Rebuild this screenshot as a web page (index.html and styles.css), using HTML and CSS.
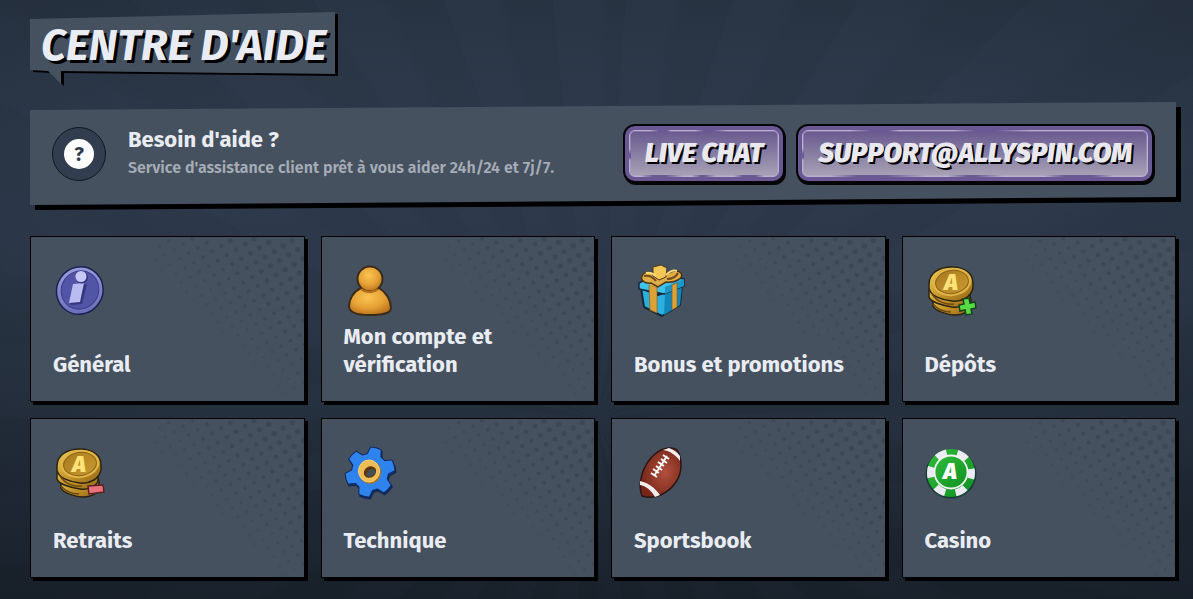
FILE: index.html
```
<!DOCTYPE html>
<html lang="fr">
<head>
<meta charset="utf-8">
<title>Centre d'aide</title>
<link rel="stylesheet" href="styles.css">
</head>
<body>
<svg class="defs" aria-hidden="true">
  <defs>
    <linearGradient id="gold" x1="0" y1="0" x2="1" y2="1"><stop offset="0" stop-color="#f0cf5c"/><stop offset=".5" stop-color="#c8982c"/><stop offset="1" stop-color="#936414"/></linearGradient>
    <linearGradient id="goldFace" x1="0" y1="0" x2="1" y2="1"><stop offset="0" stop-color="#a87a1e"/><stop offset="1" stop-color="#c99a30"/></linearGradient>
    <linearGradient id="indigo" x1="0" y1="0" x2="1" y2="1"><stop offset="0" stop-color="#a3a5e4"/><stop offset="1" stop-color="#6163b0"/></linearGradient>
    <radialGradient id="amber" cx=".45" cy=".35" r=".7"><stop offset="0" stop-color="#fbc552"/><stop offset=".55" stop-color="#e6a136"/><stop offset="1" stop-color="#b56d17"/></radialGradient>
    <radialGradient id="leather" cx=".6" cy=".5" r=".6"><stop offset="0" stop-color="#b0503c"/><stop offset="1" stop-color="#762519"/></radialGradient>
    <linearGradient id="chip" x1="0" y1="0" x2="1" y2="1"><stop offset="0" stop-color="#2fbc3a"/><stop offset="1" stop-color="#109022"/></linearGradient>
    <symbol id="coins" viewBox="0 0 54 64">
      <g stroke="#2a2413" stroke-width="1.5">
        <path d="M8 40c0-5 5-8 13-8s24 2 25 8v7c-1 6-9 9-16 9S10 52 8 47z" fill="url(#gold)"/>
        <path d="M4 32c0-5 6-8 15-8s25 4 26 10v6c-2 6-10 9-18 8S5 43 4 38z" fill="url(#gold)"/>
        <path d="M4 25C4 14 14 8 27 8s21 7 21 16v5c-2 9-11 14-21 13S5 37 4 29z" fill="url(#gold)"/>
      </g>
      <ellipse cx="27" cy="23" rx="19.500" ry="14" fill="#dfb548" transform="rotate(-8 27 23)"/>
      <ellipse cx="27" cy="23" rx="16.500" ry="11.500" fill="url(#goldFace)" stroke="#8c6114" transform="rotate(-8 27 23)"/>
      <path d="M7 35c5 8 14 11 22 10M8 45c5 6 11 8 18 8" fill="none" stroke="#6f4c10" stroke-width="1.500"/>
      <text x="26" y="31" class="coin-letter" fill="#ffe277">A</text>
    </symbol>
    <g id="cog">
      <circle r="18"/>
      <g id="cog-teeth">
        <path id="tooth" d="M-7-15L-5-24Q0-25 5-24L7-15z"/>
        <use href="#tooth" transform="rotate(60)"/>
        <use href="#tooth" transform="rotate(120)"/>
        <use href="#tooth" transform="rotate(180)"/>
        <use href="#tooth" transform="rotate(240)"/>
        <use href="#tooth" transform="rotate(300)"/>
      </g>
    </g>
    <symbol id="dots" viewBox="0 0 150 160"></symbol>
  </defs>
</svg>

<main class="page">
  <h1 class="title">CENTRE D'AIDE</h1>

  <section class="banner">
    <div class="badge"><span class="badge-mark">?</span></div>
    <div class="banner-copy">
      <h2 class="banner-title">Besoin d'aide ?</h2>
      <p class="banner-text">Service d'assistance client prêt à vous aider 24h/24 et 7j/7.</p>
    </div>
    <div class="actions">
      <button class="action" type="button">LIVE CHAT</button>
      <a class="action" href="mailto:support@allyspin.com">SUPPORT@ALLYSPIN.COM</a>
    </div>
  </section>

  <nav class="topics" aria-label="Rubriques d'aide">
    <a class="topic" href="#general">
      <svg class="topic-icon" viewBox="0 0 54 64" aria-hidden="true">
        <ellipse cx="26.500" cy="31.500" rx="23" ry="24" fill="url(#indigo)" stroke="#1c2150" stroke-width="1.500" transform="rotate(35 26.500 32)"/>
        <ellipse cx="27" cy="31" rx="18.500" ry="19.500" fill="#5255a6" stroke="#3d3f8c" transform="rotate(35 27 31)"/>
        <path d="M22 26l12-1-5 20-12 1z" fill="#34367e"/>
        <path d="M20 25l11-1-4 19-11 1z" fill="#b9bbf1"/>
        <circle cx="29" cy="18.500" r="6" fill="#34367e"/><circle cx="28" cy="17.500" r="5.500" fill="#c6c8f6"/>
      </svg>
      <span class="topic-name">Général</span>
    </a>
    <a class="topic" href="#compte">
      <svg class="topic-icon" viewBox="0 0 54 64" aria-hidden="true">
        <path d="M17 29c-7 3-12 11-12 18 0 6 8 9 20 9s22-1 22-7c0-8-5-16-12-20z" fill="url(#amber)" stroke="#3a2c1b" stroke-width="2"/>
        <circle cx="26" cy="20" r="12.500" fill="url(#amber)" stroke="#3a2c1b" stroke-width="2"/>
        <path d="M17 30c5 4 12 4 17 0" fill="none" stroke="#b56d17" stroke-width="2"/>
      </svg>
      <span class="topic-name">Mon compte et vérification</span>
    </a>
    <a class="topic" href="#bonus">
      <svg class="topic-icon" viewBox="0 0 54 64" aria-hidden="true">
        <path d="M7 29l17 7 24-10-2 20-18 11-18-9z" fill="#2bb0dd" stroke="#14293a" stroke-width="2" stroke-linejoin="round"/>
        <path d="M31 35l17-8-2 19-16 10z" fill="#1287bb"/>
        <path d="M5 24l18-9 27 5v7L30 35 5 30z" fill="#3fc2ee" stroke="#14293a" stroke-width="1.500" stroke-linejoin="round"/>
        <path d="M31 28l19-8v7l-19 8z" fill="#1a98cc"/>
        <path d="M15 26l8 2v26l-7-3zM38 26l5-2v24l-5 3z" fill="#dda236" stroke="#8b5c17" stroke-width=".7"/>
        <path d="M15 26l14-9 8 2-14 9z" fill="#efbd4a"/>
        <path d="M8 17c2-5 9-5 15-1l6 2c6-6 15-8 18-4 3 5-5 10-15 9l-8 5-7-4c-6 1-11-3-9-7z" fill="#dfac45" stroke="#4c3517" stroke-width="1.500"/>
        <path d="M19 8l8-2 6 3-1 9-7 3-6-4z" fill="#f3c655" stroke="#4c3517"/>
        <path d="M10 17c5-1 9 1 12 5M33 20c5 0 9-2 11-6" fill="none" stroke="#70491a" stroke-width="2"/>
        <path d="M12 14c4-1 7 0 10 3M32 16c4-4 8-5 11-4" fill="none" stroke="#fbdb80" stroke-width="2"/>
      </svg>
      <span class="topic-name">Bonus et promotions</span>
    </a>
    <a class="topic" href="#depots">
      <svg class="topic-icon" viewBox="0 0 54 64" aria-hidden="true">
        <use href="#coins"/>
        <path d="M38 40l6-1 1 5 5-1 1 6-5 1 1 5-6 1-1-5-5 1-1-6 5-1z" fill="#55dc45" stroke="#18411d" stroke-width="1.500"/>
      </svg>
      <span class="topic-name">Dépôts</span>
    </a>
    <a class="topic" href="#retraits">
      <svg class="topic-icon" viewBox="0 0 54 64" aria-hidden="true">
        <use href="#coins"/>
        <path d="M35 45l15-1 1 7-15 2z" fill="#ea727a" stroke="#5e2226" stroke-width="1.500"/>
      </svg>
      <span class="topic-name">Retraits</span>
    </a>
    <a class="topic" href="#technique">
      <svg class="topic-icon" viewBox="0 0 54 64" aria-hidden="true">
        <use href="#cog" transform="translate(27 33) rotate(14)" fill="#1a4fae" stroke="#12295c" stroke-width="2"/>
        <use href="#cog" transform="translate(26 31) rotate(14)" fill="#2f83ee" stroke="#12295c" stroke-width="2"/>
        <use href="#cog" transform="translate(26 31) rotate(14)" fill="#2f83ee"/>
        <ellipse cx="26" cy="31" rx="11" ry="11.500" fill="#b8730d"/>
        <ellipse cx="25" cy="30" rx="10.500" ry="11" fill="#eebd55" stroke="#f6d27c"/>
        <ellipse cx="26" cy="31" rx="6.500" ry="5.500" fill="#5d360f" transform="rotate(-35 26 31)"/>
        <ellipse cx="27" cy="32" rx="4.500" ry="3.200" fill="#45505d" transform="rotate(-35 27 32)"/>
      </svg>
      <span class="topic-name">Technique</span>
    </a>
    <a class="topic" href="#sportsbook">
      <svg class="topic-icon" viewBox="0 0 54 64" aria-hidden="true">
        <path d="M8 55C3 42 9 23 21 13c7-6 17-8 22-4 5 8 6 22-1 32-8 12-22 18-34 14z" fill="url(#leather)" stroke="#2a1614" stroke-width="1.500"/>
        <path d="M29 9c7 1 13 5 17 11l0-5c-3-4-6-6-11-8z" fill="#f3eeee"/>
        <path d="M6 40c9 2 15 7 20 14l-5 2C17 49 12 45 6 44z" fill="#f3eeee"/>
        <path d="M33 15L20 35M29 14l6 4M27 18l6 4M24 21l6 4M22 25l6 4M19 28l6 4M17 32l6 4" fill="none" stroke="#fff" stroke-width="1.800"/>
      </svg>
      <span class="topic-name">Sportsbook</span>
    </a>
    <a class="topic" href="#casino">
      <svg class="topic-icon" viewBox="0 0 54 64" aria-hidden="true">
        <ellipse cx="26" cy="33" rx="25.500" ry="24.500" fill="#1c3b3c"/>
        <circle cx="26" cy="32" r="24" fill="url(#chip)"/>
        <circle cx="26" cy="32" r="20.500" fill="none" stroke="#eceaf5" stroke-width="7" stroke-dasharray="10.730 10.730" stroke-dashoffset="5"/>
        <circle cx="26" cy="31" r="16.500" fill="url(#chip)" stroke="#f1f4f1" stroke-width="1.800"/>
        <text x="25" y="38" class="coin-letter" fill="#fff">A</text>
      </svg>
      <span class="topic-name">Casino</span>
    </a>
  </nav>
</main>
<script src="dots.js"></script>
</body>
</html>
```
FILE: styles.css
```
* { box-sizing: border-box; }
body {
  margin: 0;
  min-height: 100vh;
  font-family: "Fira Sans", "Noto Sans", sans-serif;
  color: #e9edf3;
  background:
    radial-gradient(ellipse at 50% 40%, transparent 50%, rgba(15, 22, 30, .2) 100%),
    repeating-conic-gradient(from 4deg at 50% 70%, rgba(120, 150, 185, .018) 0 6deg, transparent 8deg 14deg),
    linear-gradient(#283342 0%, #2d394a 25%, #2b3747 45%, #222c39 75%, #19212b 100%);
}
.defs { position: absolute; width: 0; height: 0; }
.page { padding: 12px 17px 21px 30px; }

.title {
  position: relative;
  isolation: isolate;
  width: fit-content;
  margin: 0 0 18px;
  padding: 4px 9px 8px 11px;
  font-size: 44px;
  line-height: 60px;
  font-weight: 700;
  font-style: italic;
  text-shadow: 3px 3px 0 #000;
}
.title::before, .title::after {
  content: "";
  position: absolute;
  inset: 0;
  z-index: -1;
  background: #46515f;
  clip-path: polygon(0 7px, 100% 0, 100% 62px, 31px 59px, 31px 100%, 18px 59px, 0 58px);
}
.title::before { background: #000; transform: translate(3px, 2px); }

.banner {
  position: relative;
  isolation: isolate;
  display: flex;
  align-items: center;
  gap: 22px;
  padding: 22px;
  margin-bottom: 31px;
}
.banner::before, .banner::after {
  content: "";
  position: absolute;
  inset: 0;
  z-index: -1;
  background: #46515f;
  clip-path: polygon(0 8px, 100% 0, 100% 95px, 0 100%);
}
.banner::before { background: #000; transform: translate(5px, 5px); }
.badge {
  display: grid;
  place-items: center;
  flex: none;
  width: 54px;
  height: 54px;
  border: 1px solid #10171f;
  border-radius: 50%;
  background: #323e50;
}
.badge-mark {
  display: grid;
  place-items: center;
  width: 30px;
  height: 30px;
  border-radius: 50%;
  background: #fff;
  color: #303c4d;
  font-size: 20px;
  line-height: 30px;
  font-weight: 700;
}
.banner-copy { flex: 1; }
.banner-title { margin: 0; font-size: 22px; line-height: 28px; font-weight: 700; }
.banner-text {
  margin: 0;
  font-size: 16px;
  line-height: 28px;
  font-weight: 600;
  color: #a5acb6;
}
.actions { display: flex; gap: 11px; }
.action {
  position: relative;
  isolation: isolate;
  display: block;
  padding: 0 20px;
  border: 2px solid #050507;
  border-radius: 12px;
  background: #695893;
  box-shadow: 1px 2px 0 #050507;
  font: italic 900 27px/55px "Fira Sans", "Noto Sans", sans-serif;
  color: #e9e8ef;
  text-decoration: none;
  text-shadow: 2px 2px 0 #000;
  cursor: pointer;
}
.action::before, .action::after {
  content: "";
  position: absolute;
  inset: 4px;
  z-index: -1;
  border-radius: 6px;
}
.action::before {
  border: 1px solid #b9b0d2;
  background: linear-gradient(#69598f, #877da2 50%, #a8a2b5);
  box-shadow: inset 0 0 0 1px rgba(185, 176, 210, .35);
}
/* Worn breaks along the top and bottom of the inner frame */
.action::after {
  background:
    linear-gradient(90deg, transparent 14%, #695893 20% 25%, transparent 28% 44%, #695893 50% 56%, transparent 66%) 0 0 / 100% 2px no-repeat,
    linear-gradient(90deg, transparent 8%, #695893 16% 24%, transparent 36% 42%, #695893 48% 50%, transparent 58% 70%, #695893 76% 84%, transparent 90%) 0 100% / 100% 2px no-repeat,
    linear-gradient(transparent 40%, #695893 52% 58%, transparent 64%) 0 0 / 2px 100% no-repeat;
}

.topics {
  display: grid;
  grid-template-columns: repeat(4, 1fr);
  gap: 16px;
}
.topic {
  position: relative;
  isolation: isolate;
  display: flex;
  flex-direction: column;
  justify-content: space-between;
  min-height: 160px;
  padding: 22px;
  border: 1px solid #000;
  background: #46515f;
  box-shadow: 3px 3px 0 #000;
  color: inherit;
  text-decoration: none;
}
.topic-icon { width: 54px; height: 64px; overflow: visible; }
.topic-name { max-width: 212px; font-size: 22px; line-height: 28px; font-weight: 700; }
.topic-dots {
  position: absolute;
  top: 0;
  right: 0;
  z-index: -1;
  width: 150px;
  height: 160px;
}
.coin-letter {
  font: italic 900 23px "Fira Sans", "Noto Sans", sans-serif;
  text-anchor: middle;
}
```
FILE: dots.js
```
// Halftone corner: a tilted grid of dots that shrink towards the lower left.
const NS = 'http://www.w3.org/2000/svg';
const sheet = document.getElementById('dots');
const tilt = 14 * Math.PI / 180;
for (let i = -20; i < 30; i++) {
  for (let j = -20; j < 40; j++) {
    const u = i * 15 + (j % 2 ? 7.5 : 0);
    const v = j * 7.5;
    const x = u * Math.cos(tilt) - v * Math.sin(tilt);
    const y = u * Math.sin(tilt) + v * Math.cos(tilt);
    const strength = (x - y + 28) / 150;
    if (x < 0 || x > 152 || y < 0 || y > 158 || strength <= 0) continue;
    const dot = document.createElementNS(NS, 'circle');
    dot.setAttribute('cx', x.toFixed(1));
    dot.setAttribute('cy', y.toFixed(1));
    dot.setAttribute('r', Math.min(2.7, 1.3 + strength * 1.5).toFixed(1));
    dot.setAttribute('fill', '#3b4654');
    dot.setAttribute('opacity', Math.min(0.8, 0.3 + strength).toFixed(2));
    sheet.append(dot);
  }
}
for (const card of document.querySelectorAll('.topic')) {
  const svg = document.createElementNS(NS, 'svg');
  svg.setAttribute('class', 'topic-dots');
  svg.setAttribute('aria-hidden', 'true');
  const use = document.createElementNS(NS, 'use');
  use.setAttribute('href', '#dots');
  svg.append(use);
  card.append(svg);
}
```
